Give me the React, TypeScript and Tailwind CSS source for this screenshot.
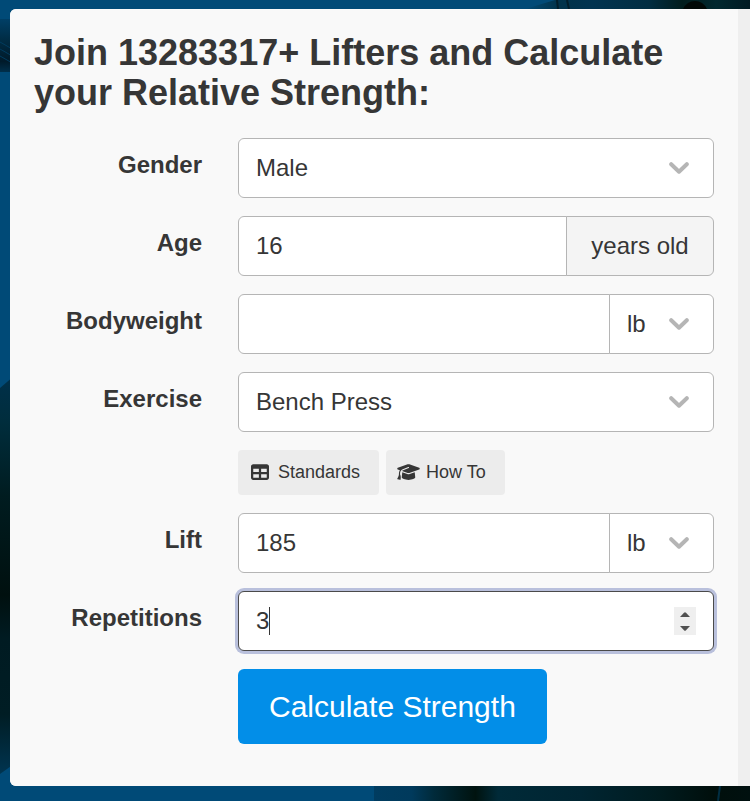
import { useState } from 'react';
import type { ReactNode, SelectHTMLAttributes } from 'react';
import { FaGraduationCap, FaTable } from 'react-icons/fa6';

const inputClass = 'h-[60px] w-full min-w-0 border border-[#b5b5b5] bg-white px-[17px] text-[#363636] outline-none';
const tagClass = 'flex h-[45px] items-center gap-[6px] rounded-sm bg-[#ececec] pr-[19px] pb-[2px] pl-[10px]';

function Backdrop() {
  return (
    <svg aria-hidden="true" className="absolute inset-0 -z-10 h-full w-full" viewBox="0 0 750 801" preserveAspectRatio="none">
      <defs>
        <linearGradient id="wedge" x1="0" y1="0" x2="0" y2="1">
          <stop offset="0" stopColor="#00304a" />
          <stop offset="0.12" stopColor="#002d3c" />
          <stop offset="0.3" stopColor="#001c20" />
          <stop offset="0.55" stopColor="#00100f" />
          <stop offset="0.66" stopColor="#001b22" />
          <stop offset="0.85" stopColor="#001d24" />
          <stop offset="1" stopColor="#003450" />
        </linearGradient>
        <linearGradient id="top" x1="0" y1="0" x2="1" y2="0">
          <stop offset="0" stopColor="#004a76" />
          <stop offset="0.15" stopColor="#00324a" />
          <stop offset="0.3" stopColor="#003350" />
          <stop offset="0.55" stopColor="#002d42" />
          <stop offset="0.7" stopColor="#001c1c" />
          <stop offset="0.85" stopColor="#00282f" />
          <stop offset="1" stopColor="#001a22" />
        </linearGradient>
        <linearGradient id="bottom" x1="0" y1="0" x2="1" y2="0">
          <stop offset="0" stopColor="#003c60" />
          <stop offset="0.1" stopColor="#003a5c" />
          <stop offset="0.16" stopColor="#002a3a" />
          <stop offset="0.27" stopColor="#00130f" />
          <stop offset="0.33" stopColor="#002a38" />
          <stop offset="0.55" stopColor="#002532" />
          <stop offset="0.75" stopColor="#001c20" />
          <stop offset="0.9" stopColor="#000f0c" />
          <stop offset="1" stopColor="#00100f" />
        </linearGradient>
        <linearGradient id="plates" x1="0" y1="0" x2="0" y2="1">
          <stop offset="0" stopColor="#003f66" />
          <stop offset="0.4" stopColor="#002c44" />
          <stop offset="0.8" stopColor="#001a2a" />
          <stop offset="1" stopColor="#002f4b" />
        </linearGradient>
      </defs>
      <rect width="750" height="801" fill="#004a77" />
      <rect y="19" width="14" height="53" fill="url(#plates)" />
      <path d="M0 42l14 8M0 49l14 8M0 56l14 8" stroke="#003c5e" />
      <path d="M0 388L14 376V764L0 774Z" fill="url(#wedge)" />
      <path d="M525 9L555 0H750V9Z" fill="url(#top)" />
      <path d="M557 0l1 9M567 0l2 9" stroke="#001d2a" strokeWidth="2" />
      <path d="M683 9q4-8 12-8t12 8Z" fill="#000806" />
      <rect x="374" y="786" width="376" height="15" fill="url(#bottom)" />
      <path d="M720 786l-2 15" stroke="#002e42" strokeWidth="2" />
    </svg>
  );
}

function Field({ label, htmlFor, children }: { label?: string; htmlFor?: string; children: ReactNode }) {
  return (
    <div className="flex gap-9">
      <div className="w-[168px] shrink-0 pt-[9px] text-right">
        {label && <label htmlFor={htmlFor} className="font-bold leading-9">{label}</label>}
      </div>
      <div className="flex min-w-0 flex-1">{children}</div>
    </div>
  );
}

function Select({ className, children, ...props }: SelectHTMLAttributes<HTMLSelectElement>) {
  return (
    <div className={`relative ${className}`}>
      <select {...props} className={`${inputClass} appearance-none rounded-[inherit]`}>
        {children}
      </select>
      <svg aria-hidden="true" className="pointer-events-none absolute top-6 right-[25px] h-3 w-5" viewBox="0 0 20 12" fill="none" stroke="#b5b5b5" strokeWidth="4" strokeLinecap="round" strokeLinejoin="round">
        <path d="M2.2 2.2L10 9.7l7.8-7.5" />
      </svg>
    </div>
  );
}

function UnitSelect({ label }: { label: string }) {
  return (
    <Select aria-label={label} className="-ml-px w-[105px] shrink-0 rounded-r-md">
      <option>lb</option>
      <option>kg</option>
    </Select>
  );
}

export default function App() {
  const [age, setAge] = useState('16');
  const [bodyweight, setBodyweight] = useState('');
  const [lift, setLift] = useState('185');
  const [reps, setReps] = useState(3);

  return (
    <main className="relative isolate min-h-screen pt-[9px] pb-[15px] pl-[10px] font-['Liberation_Sans',Arial,sans-serif] text-2xl text-[#363636]">
      <Backdrop />
      <div className="flex overflow-hidden rounded-l-md bg-[#efefef] pr-3">
        <section className="min-w-0 flex-1 bg-[#f9f9f9] px-6 pt-6 pb-[42px]">
          <h1 className="mb-[25px] text-4xl leading-10 font-bold">
            Join 13283317+ Lifters and Calculate your Relative Strength:
          </h1>
          <form className="flex flex-col gap-[18px]" onSubmit={(e) => e.preventDefault()}>
            <Field label="Gender" htmlFor="gender">
              <Select id="gender" className="w-full rounded-md">
                <option>Male</option>
                <option>Female</option>
              </Select>
            </Field>
            <Field label="Age" htmlFor="age">
              <input id="age" inputMode="numeric" value={age} onChange={(e) => setAge(e.target.value)} className={`${inputClass} rounded-l-md`} />
              <span className="-ml-px flex w-[148px] shrink-0 items-center justify-center rounded-r-md border border-[#b5b5b5] bg-[#f4f4f4]">years old</span>
            </Field>
            <Field label="Bodyweight" htmlFor="bodyweight">
              <input id="bodyweight" inputMode="decimal" value={bodyweight} onChange={(e) => setBodyweight(e.target.value)} className={`${inputClass} rounded-l-md`} />
              <UnitSelect label="Bodyweight unit" />
            </Field>
            <Field label="Exercise" htmlFor="exercise">
              <Select id="exercise" className="w-full rounded-md">
                <option>Bench Press</option>
                <option>Squat</option>
                <option>Deadlift</option>
              </Select>
            </Field>
            <Field>
              <div className="flex gap-[7px] text-lg">
                <button type="button" className={tagClass}>
                  <span className="flex w-6 justify-center"><FaTable className="size-[18px]" /></span>
                  Standards
                </button>
                <button type="button" className={tagClass}>
                  <span className="flex w-6 justify-center"><FaGraduationCap className="h-[18px] w-[23px]" /></span>
                  How To
                </button>
              </div>
            </Field>
            <Field label="Lift" htmlFor="lift">
              <input id="lift" inputMode="decimal" value={lift} onChange={(e) => setLift(e.target.value)} className={`${inputClass} rounded-l-md`} />
              <UnitSelect label="Lift unit" />
            </Field>
            <Field label="Repetitions" htmlFor="reps">
              <div className="relative w-full">
                <input
                  id="reps"
                  inputMode="numeric"
                  value={reps}
                  onChange={(e) => setReps(Number(e.target.value) || 0)}
                  className="h-[60px] w-full rounded-md border border-[#4a4a4a] bg-white px-[17px] text-[#363636] caret-transparent ring-3 ring-[#b9c0dc] outline-none"
                />
                <span aria-hidden="true" className="absolute top-4 left-[31px] h-7 w-px bg-[#363636]" />
                <div className="absolute top-4 right-[18px] flex h-7 w-[22px] flex-col bg-[#efefef]">
                  <button type="button" aria-label="Increase repetitions" onClick={() => setReps(reps + 1)} className="flex flex-1 items-center justify-center">
                    <svg className="h-[5px] w-[10px]" viewBox="0 0 10 5" fill="#505050"><path d="M0 5L4 .8q1-1 2 0L10 5Z" /></svg>
                  </button>
                  <button type="button" aria-label="Decrease repetitions" onClick={() => setReps(Math.max(1, reps - 1))} className="flex flex-1 items-center justify-center">
                    <svg className="h-[5px] w-[10px]" viewBox="0 0 10 5" fill="#505050"><path d="M0 0L4 4.2q1 1 2 0L10 0Z" /></svg>
                  </button>
                </div>
              </div>
            </Field>
            <Field>
              <button type="submit" className="h-[75px] rounded-md bg-[#028ee8] px-[31px] text-3xl text-white">
                Calculate Strength
              </button>
            </Field>
          </form>
        </section>
      </div>
    </main>
  );
}
